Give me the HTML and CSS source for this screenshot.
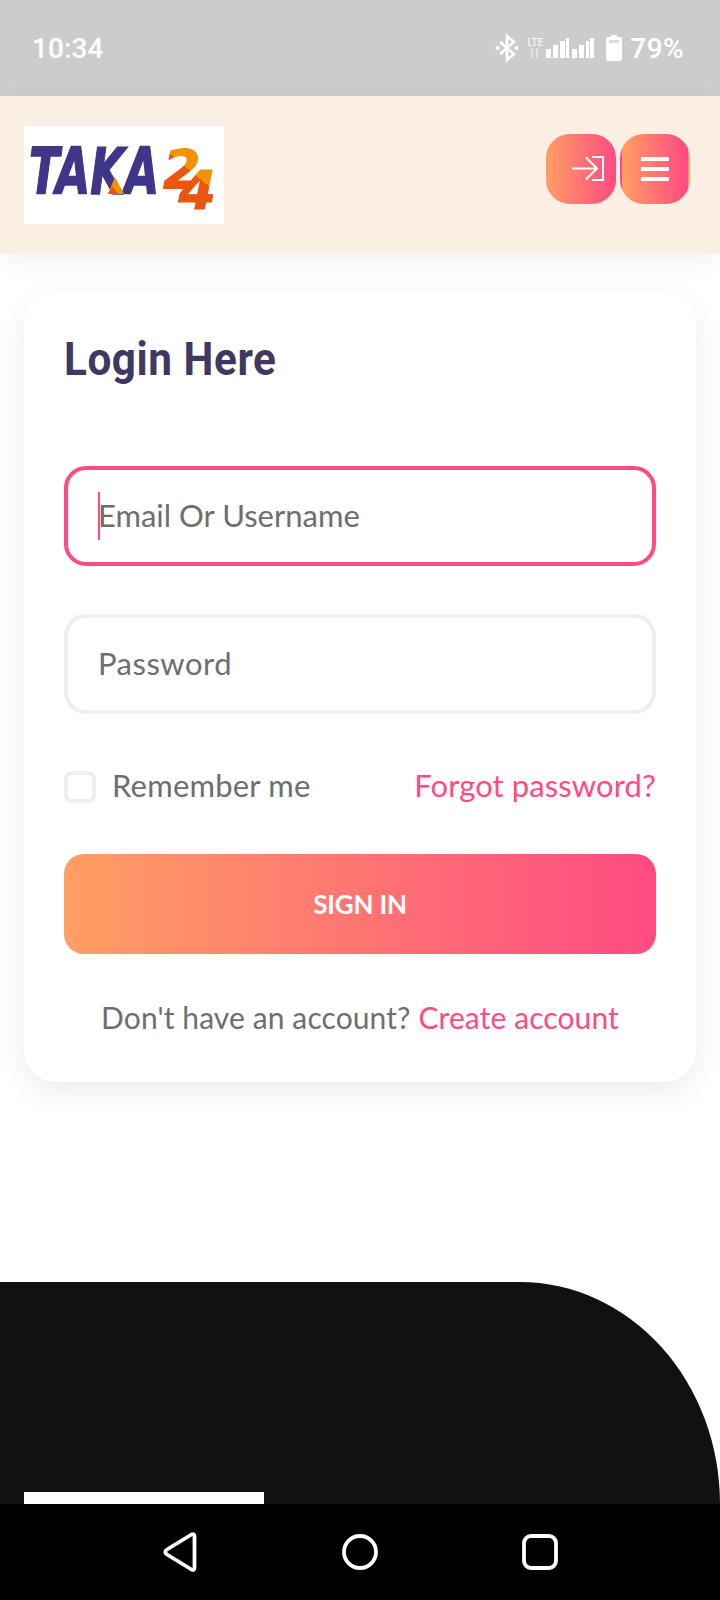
FILE: index.html
```html
<!DOCTYPE html>
<html lang="en">
<head>
<meta charset="utf-8">
<title>Login</title>
<link rel="stylesheet" href="styles.css">
</head>
<body>
<div class="page">
  <div class="status">
    <span class="time">10:34</span>
    <div class="status-right">
      <svg class="bt" width="24" height="28" viewBox="0 0 24 28"><path d="M5 8l14 12-7 6V2l7 6L5 20" fill="none" stroke="#fff" stroke-width="2.6"/><circle cx="2.5" cy="14" r="2" fill="#fff"/><circle cx="21.500" cy="14" r="2" fill="#fff"/></svg>
      <div class="lte"><span class="lte-t">LTE</span><svg width="12" height="10" viewBox="0 0 12 10"><path d="M3 0v10M8 0v10" stroke="#fff" stroke-opacity=".4" stroke-width="2"/></svg></div>
      <svg class="bars" width="48" height="20" viewBox="0 0 48 20"><path d="M0 11h5v9H0zM7 7h5v13H7zM14 3h5v17h-5zM20 0h3v20h-3z" fill="#fff"/><path d="M26 11h5v9h-5zM33 7h5v13h-5zM40 3h3v17h-3zM44 0h4v20h-4z" fill="#fff"/></svg>
      <svg class="batt" width="16" height="26" viewBox="0 0 16 26"><path d="M5 0h6v2h3a2 2 0 0 1 2 2v20a2 2 0 0 1-2 2H2a2 2 0 0 1-2-2V4a2 2 0 0 1 2-2h3z" fill="#fff"/><rect x="3" y="5" width="10" height="3" fill="#ddd"/></svg>
      <span class="pct">79%</span>
    </div>
  </div>

  <header class="top">
    <div class="logo">
      <svg width="200" height="98" viewBox="0 0 200 98">
        <defs>
          <linearGradient id="lg" gradientUnits="userSpaceOnUse" x1="180" y1="36" x2="160" y2="60">
            <stop offset=".5" stop-color="#f39207"/>
            <stop offset=".5" stop-color="#ea5510"/>
          </linearGradient>
        </defs>
        <text class="logo-taka" x="5" y="68" textLength="130" lengthAdjust="spacingAndGlyphs">TAKA</text>
        <polygon points="84,68 91,51 100,68" fill="#f39207"/>
        <polygon points="84,68 88,60 94,68" fill="#ea5510"/>
        <text class="logo-num" x="139" y="62" fill="url(#lg)">2<tspan dx="-22" dy="21">4</tspan></text>
      </svg>
    </div>
    <div class="top-actions">
      <a class="icon-btn icon-btn-login">
        <svg width="32" height="26" viewBox="0 0 32 26"><path d="M0 12.500h25M14 1.500l11 11-11 11" fill="none" stroke="#fff" stroke-width="2"/><path d="M20 1h11v23H20" fill="none" stroke="#fff" stroke-width="2"/></svg>
      </a>
      <a class="icon-btn icon-btn-menu">
        <span class="burger"><i></i><i></i><i></i></span>
      </a>
    </div>
  </header>

  <main class="main">
    <section class="card">
      <h1 class="title">Login Here</h1>
      <form class="form">
        <div class="field field-active">
          <input class="input input-email" type="text" placeholder="Email Or Username">
          <span class="caret"></span>
        </div>
        <div class="field">
          <input class="input input-pass" type="password" placeholder="Password">
        </div>
        <div class="options">
          <label class="remember"><span class="check"></span>Remember me</label>
          <a class="link">Forgot password?</a>
        </div>
        <button class="submit" type="button">SIGN IN</button>
        <p class="signup">Don't have an account? <a class="link">Create account</a></p>
      </form>
    </section>
  </main>

  <footer class="foot"><div class="foot-bar"></div></footer>

  <nav class="sysnav">
    <svg width="36" height="40" viewBox="0 0 36 40"><path d="M5 17.500L29.500 2.500q3-1.500 3 2v31q0 3.500-3 2L5 22.500q-3.500-2.500 0-5z" fill="none" stroke="#fff" stroke-width="3.800" stroke-linejoin="round"/></svg>
    <svg width="36" height="36" viewBox="0 0 36 36"><circle cx="18" cy="18" r="16" fill="none" stroke="#fff" stroke-width="3.800"/></svg>
    <svg width="36" height="36" viewBox="0 0 36 36"><rect x="2" y="2" width="32" height="32" rx="7" fill="none" stroke="#fff" stroke-width="3.800"/></svg>
  </nav>
</div>
</body>
</html>
```

FILE: styles.css
```css
* { box-sizing: border-box; }
html, body { margin: 0; padding: 0; background: #fff; }
.page { width: 720px; height: 1600px; display: flex; flex-direction: column; overflow: hidden; font-family: "Lato", "Open Sans", sans-serif; }

.status { height: 96px; flex: none; background: #cccccc; display: flex; align-items: center; justify-content: space-between; padding: 0 36px 0 32px; color: #fff; font-family: "Roboto", sans-serif; }
.time { font-size: 28px; font-weight: 500; letter-spacing: .1px; }
.status-right { display: flex; align-items: center; }
.bt { margin-right: 6px; }
.lte { display: flex; flex-direction: column; align-items: center; width: 20px; margin-right: 1px; margin-top: -1px; }
.lte-t { font-size: 10px; line-height: 11px; }
.bars { margin-right: 12px; margin-top: -1px; }
.batt { margin-right: 8px; }
.pct { font-size: 28px; font-weight: 500; letter-spacing: .4px; }

.top { height: 158px; flex: none; background: #fbeee3; display: flex; align-items: flex-start; justify-content: space-between; padding: 30px 30px 0 24px; box-shadow: 0 6px 24px rgba(0,0,0,.06); position: relative; }
.logo { width: 200px; height: 98px; background: #fff; }
.logo svg { display: block; }
.logo-taka { font-family: "DejaVu Sans", sans-serif; font-weight: 700; font-style: italic; font-size: 64px; fill: #3f3589; stroke: #3f3589; stroke-width: 1.5px; }
.logo-num { font-family: "DejaVu Sans", sans-serif; font-weight: 700; font-style: italic; font-size: 54px; stroke: url(#lg); stroke-width: 1px; }
.top-actions { display: flex; gap: 4px; margin-top: 8px; }
.icon-btn { width: 70px; height: 70px; border-radius: 24px; background: linear-gradient(90deg, #ff9f63, #ff4a82); display: flex; align-items: center; justify-content: center; }
.icon-btn-login svg { margin-left: 14px; }
.icon-btn-menu { border: 2px solid transparent; }
.burger { width: 28px; display: flex; flex-direction: column; gap: 6px; }
.burger i { display: block; height: 4px; background: #fff; }

.main { flex: 1; padding: 37px 24px 0; }
.card { height: 791px; background: #fff; border-radius: 32px; box-shadow: 0 10px 30px rgba(0,0,0,.08); padding: 38px 40px 0; }
.title { margin: 0; font-family: "Roboto", sans-serif; font-size: 47px; line-height: 60px; font-weight: 700; letter-spacing: .6px; color: #3f3862; transform: scaleX(.9); transform-origin: left center; }
.form { margin-top: 77px; display: flex; flex-direction: column; }
.field { position: relative; height: 100px; margin-bottom: 48px; }
.input { width: 100%; height: 100%; border: 4px solid #eeeeee; border-radius: 22px; padding: 0 30px 2px; font: inherit; font-size: 31px; color: #6e6e6e; background: #fff; outline: none; }
.input::placeholder { color: #6e6e6e; opacity: 1; }
.input-pass { letter-spacing: .5px; }
.field-active .input { border-color: #ff4a82; }
.caret { position: absolute; left: 34px; top: 26px; width: 2px; height: 48px; background: #ff4a82; }

.options { display: flex; align-items: center; justify-content: space-between; margin-top: 7px; margin-bottom: 3px; height: 32px; font-size: 31px; color: #6e6e6e; }
.remember { display: flex; align-items: center; gap: 16px; letter-spacing: .2px; }
.check { width: 32px; height: 32px; border: 4px solid #eeeeee; border-radius: 8px; background: #fff; margin-top: 3px; }
.options .link { letter-spacing: .1px; }
.link { color: #ff4a82; }
.submit { margin-top: 50px; height: 100px; border: 0; border-radius: 20px; background: linear-gradient(90deg, #ff9f63, #ff4a82); color: #fff; font: inherit; font-size: 26px; font-weight: 700; letter-spacing: -.2px; }
.signup { margin: 42px 0 0; text-align: center; font-size: 30px; line-height: 42px; color: #6e6e6e; letter-spacing: .1px; }

.foot { height: 222px; flex: none; background: #111111; border-top-right-radius: 200px 222px; display: flex; align-items: flex-end; padding-left: 24px; }
.foot-bar { width: 240px; height: 12px; background: #fff; }
.sysnav { height: 96px; flex: none; background: #000; display: flex; align-items: center; justify-content: center; gap: 144px; }
```
